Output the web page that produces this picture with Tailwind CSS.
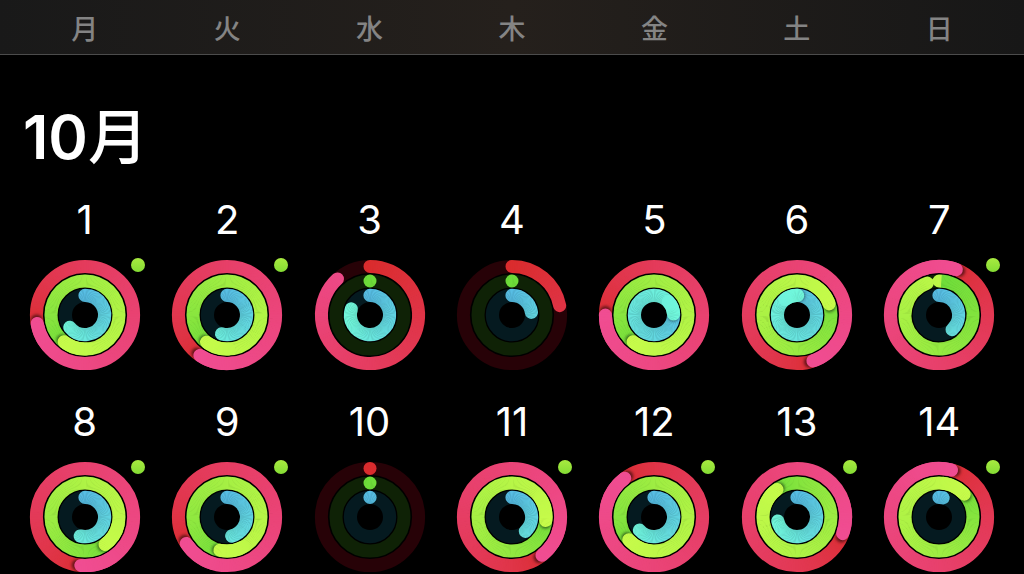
<!DOCTYPE html>
<html lang="ja">
<head>
    <meta charset="UTF-8">
    <meta name="viewport" content="width=device-width, initial-scale=1.0">
    <title>アクティビティ</title>
    <script src="https://cdn.jsdelivr.net/npm/@tailwindcss/browser@4"></script>
</head>
<body class="bg-black">
    <div class="h-[574px] overflow-hidden bg-black text-white font-['Inter','Noto_Sans_CJK_JP',sans-serif]">
        <!-- weekday header -->
        <header class="grid grid-cols-7 h-[55px] pt-[7px] px-[13.5px] items-center border-b border-[#4c4c4c] bg-linear-to-r from-[#191919] via-[#25201c] to-[#171717] text-[#848484] text-[27px] font-medium text-center">
            <span>月</span><span>火</span><span>水</span><span>木</span><span>金</span><span>土</span><span>日</span>
        </header>

        <h1 class="pl-[23px] pt-[49px] h-[145px] text-[60px] leading-[66px] font-medium"><span class="font-semibold">10</span>月</h1>

        <!-- data-rings: end angle of red, green, blue in degrees clockwise from 12 o'clock, over 360 means a lap and a bit -->
        <main class="grid grid-cols-7 px-[13.5px] gap-y-[27.5px]">
            <div class="flex flex-col items-center"><span class="h-[40px] text-[40px] leading-[40px]">1</span><div class="relative size-[120px] mt-[14.5px]"><svg data-rings="620,578,231" viewBox="-60 -60 120 120" class="size-[120px]"></svg><span class="absolute left-[106.5px] top-[3.5px] size-[14px] rounded-full bg-linear-to-b from-[#a8ea40] to-[#84dc34]"></span></div></div>
            <div class="flex flex-col items-center"><span class="h-[40px] text-[40px] leading-[40px]">2</span><div class="relative size-[120px] mt-[14.5px]"><svg data-rings="574,577,196" viewBox="-60 -60 120 120" class="size-[120px]"></svg><span class="absolute left-[106.5px] top-[3.5px] size-[14px] rounded-full bg-linear-to-b from-[#a8ea40] to-[#84dc34]"></span></div></div>
            <div class="flex flex-col items-center"><span class="h-[40px] text-[40px] leading-[40px]">3</span><div class="relative size-[120px] mt-[14.5px]"><svg data-rings="318,0,288" viewBox="-60 -60 120 120" class="size-[120px]"></svg></div></div>
            <div class="flex flex-col items-center"><span class="h-[40px] text-[40px] leading-[40px]">4</span><div class="relative size-[120px] mt-[14.5px]"><svg data-rings="79,0,82" viewBox="-60 -60 120 120" class="size-[120px]"></svg></div></div>
            <div class="flex flex-col items-center"><span class="h-[40px] text-[40px] leading-[40px]">5</span><div class="relative size-[120px] mt-[14.5px]"><svg data-rings="630,578,447" viewBox="-60 -60 120 120" class="size-[120px]"></svg></div></div>
            <div class="flex flex-col items-center"><span class="h-[40px] text-[40px] leading-[40px]">6</span><div class="relative size-[120px] mt-[14.5px]"><svg data-rings="521,431,362" viewBox="-60 -60 120 120" class="size-[120px]"></svg></div></div>
            <div class="flex flex-col items-center"><span class="h-[40px] text-[40px] leading-[40px]">7</span><div class="relative size-[120px] mt-[14.5px]"><svg data-rings="381,340,138" viewBox="-60 -60 120 120" class="size-[120px]"></svg><span class="absolute left-[106.5px] top-[3.5px] size-[14px] rounded-full bg-linear-to-b from-[#a8ea40] to-[#84dc34]"></span></div></div>
            <div class="flex flex-col items-center"><span class="h-[40px] text-[40px] leading-[40px]">8</span><div class="relative size-[120px] mt-[14.5px]"><svg data-rings="545,504,194" viewBox="-60 -60 120 120" class="size-[120px]"></svg><span class="absolute left-[106.5px] top-[3.5px] size-[14px] rounded-full bg-linear-to-b from-[#a8ea40] to-[#84dc34]"></span></div></div>
            <div class="flex flex-col items-center"><span class="h-[40px] text-[40px] leading-[40px]">9</span><div class="relative size-[120px] mt-[14.5px]"><svg data-rings="597,552,166" viewBox="-60 -60 120 120" class="size-[120px]"></svg><span class="absolute left-[106.5px] top-[3.5px] size-[14px] rounded-full bg-linear-to-b from-[#a8ea40] to-[#84dc34]"></span></div></div>
            <div class="flex flex-col items-center"><span class="h-[40px] text-[40px] leading-[40px]">10</span><div class="relative size-[120px] mt-[14.5px]"><svg data-rings="0,0,0" viewBox="-60 -60 120 120" class="size-[120px]"></svg></div></div>
            <div class="flex flex-col items-center"><span class="h-[40px] text-[40px] leading-[40px]">11</span><div class="relative size-[120px] mt-[14.5px]"><svg data-rings="502,456,137" viewBox="-60 -60 120 120" class="size-[120px]"></svg><span class="absolute left-[106.5px] top-[3.5px] size-[14px] rounded-full bg-linear-to-b from-[#a8ea40] to-[#84dc34]"></span></div></div>
            <div class="flex flex-col items-center"><span class="h-[40px] text-[40px] leading-[40px]">12</span><div class="relative size-[120px] mt-[14.5px]"><svg data-rings="683,588,228" viewBox="-60 -60 120 120" class="size-[120px]"></svg><span class="absolute left-[106.5px] top-[3.5px] size-[14px] rounded-full bg-linear-to-b from-[#a8ea40] to-[#84dc34]"></span></div></div>
            <div class="flex flex-col items-center"><span class="h-[40px] text-[40px] leading-[40px]">13</span><div class="relative size-[120px] mt-[14.5px]"><svg data-rings="470,684,258" viewBox="-60 -60 120 120" class="size-[120px]"></svg><span class="absolute left-[106.5px] top-[3.5px] size-[14px] rounded-full bg-linear-to-b from-[#a8ea40] to-[#84dc34]"></span></div></div>
            <div class="flex flex-col items-center"><span class="h-[40px] text-[40px] leading-[40px]">14</span><div class="relative size-[120px] mt-[14.5px]"><svg data-rings="375,408,12" viewBox="-60 -60 120 120" class="size-[120px]"></svg><span class="absolute left-[106.5px] top-[3.5px] size-[14px] rounded-full bg-linear-to-b from-[#a8ea40] to-[#84dc34]"></span></div></div>
        </main>
    </div>

    <script>
        const NS = 'http://www.w3.org/2000/svg';
        // span: degrees a ring that stays under one lap takes to reach its last colour
        const RINGS = [
            { r: 48.6, w: 13, span: 360, track: '#270207', from: [218, 44, 46], to: [240, 77, 146] },
            { r: 34, w: 13, span: 400, track: '#0f2206', from: [110, 220, 58], to: [198, 251, 74] },
            { r: 19.6, w: 13.2, span: 250, track: '#051a20', from: [88, 190, 228], to: [114, 248, 220] }
        ];
        const STEP = 2;
        let maskId = 0;

        function point(r, deg) {
            const a = (deg - 90) * Math.PI / 180;
            return [r * Math.cos(a), r * Math.sin(a)];
        }

        function add(parent, name, attrs, cls) {
            const el = document.createElementNS(NS, name);
            for (const k in attrs) el.setAttribute(k, attrs[k]);
            if (cls) el.setAttribute('class', cls);
            parent.appendChild(el);
            return el;
        }

        function arcPath(r, a, b) {
            const [x1, y1] = point(r, a);
            const [x2, y2] = point(r, b);
            if (a === b) return `M${x1} ${y1}L${x2} ${y2}`;
            return `M${x1} ${y1}A${r} ${r} 0 ${b - a > 180 ? 1 : 0} 1 ${x2} ${y2}`;
        }

        // wedges coloured by angle, cut to the ring's shape by a mask so its edges stay clean
        function wedges(svg, shape, ring, a, b, color) {
            const id = 'ring-mask-' + maskId++;
            const mask = add(svg, 'mask', { id, maskUnits: 'userSpaceOnUse', x: -60, y: -60, width: 120, height: 120 });
            add(mask, shape.name, Object.assign({
                fill: 'none', stroke: '#fff', 'stroke-width': ring.w, 'stroke-linecap': 'round'
            }, shape.attrs));
            const g = add(svg, 'g', { mask: `url(#${id})` });
            for (let d = a; d < b; d += STEP) {
                const [x1, y1] = point(70, d);
                const [x2, y2] = point(70, Math.min(d + STEP + 1, b));
                add(g, 'path', { d: `M0 0L${x1} ${y1}L${x2} ${y2}Z`, fill: color(d) });
            }
        }

        function drawRing(svg, ring, end) {
            add(svg, 'circle', { r: ring.r, fill: 'none', stroke: ring.track, 'stroke-width': ring.w });

            const shade = t => {
                const k = Math.min(1, Math.max(0, t));
                const c = ring.from.map((v, i) => Math.round(v + (ring.to[i] - v) * k));
                return `rgb(${c.join(',')})`;
            };
            const capAngle = 180 * ring.w / (Math.PI * ring.r) + 2;

            if (end <= 360) {
                const shape = { name: 'path', attrs: { d: arcPath(ring.r, 0, end) } };
                wedges(svg, shape, ring, -capAngle, end + capAngle, d => shade(d / ring.span));
                return;
            }

            // past one lap the gradient is turned so its last colour sits at the cap
            const start = end - 360;
            const color = d => shade(Math.pow(Math.max(0, (d - start) / 360), 0.6));
            wedges(svg, { name: 'circle', attrs: { r: ring.r } }, ring, start, end, color);

            const [sx, sy] = point(ring.r, end + 4);
            add(svg, 'circle', { cx: sx, cy: sy, r: ring.w / 2 - 0.8, fill: '#000', 'fill-opacity': 0.55 }, 'blur-[1.5px]');

            const tail = { name: 'path', attrs: { d: arcPath(ring.r, end - 40, end) } };
            wedges(svg, tail, ring, end - 40 - capAngle, end + capAngle, color);
        }

        document.querySelectorAll('svg[data-rings]').forEach(svg => {
            svg.dataset.rings.split(',').map(Number).forEach((end, i) => drawRing(svg, RINGS[i], end));
        });
    </script>
</body>
</html>
